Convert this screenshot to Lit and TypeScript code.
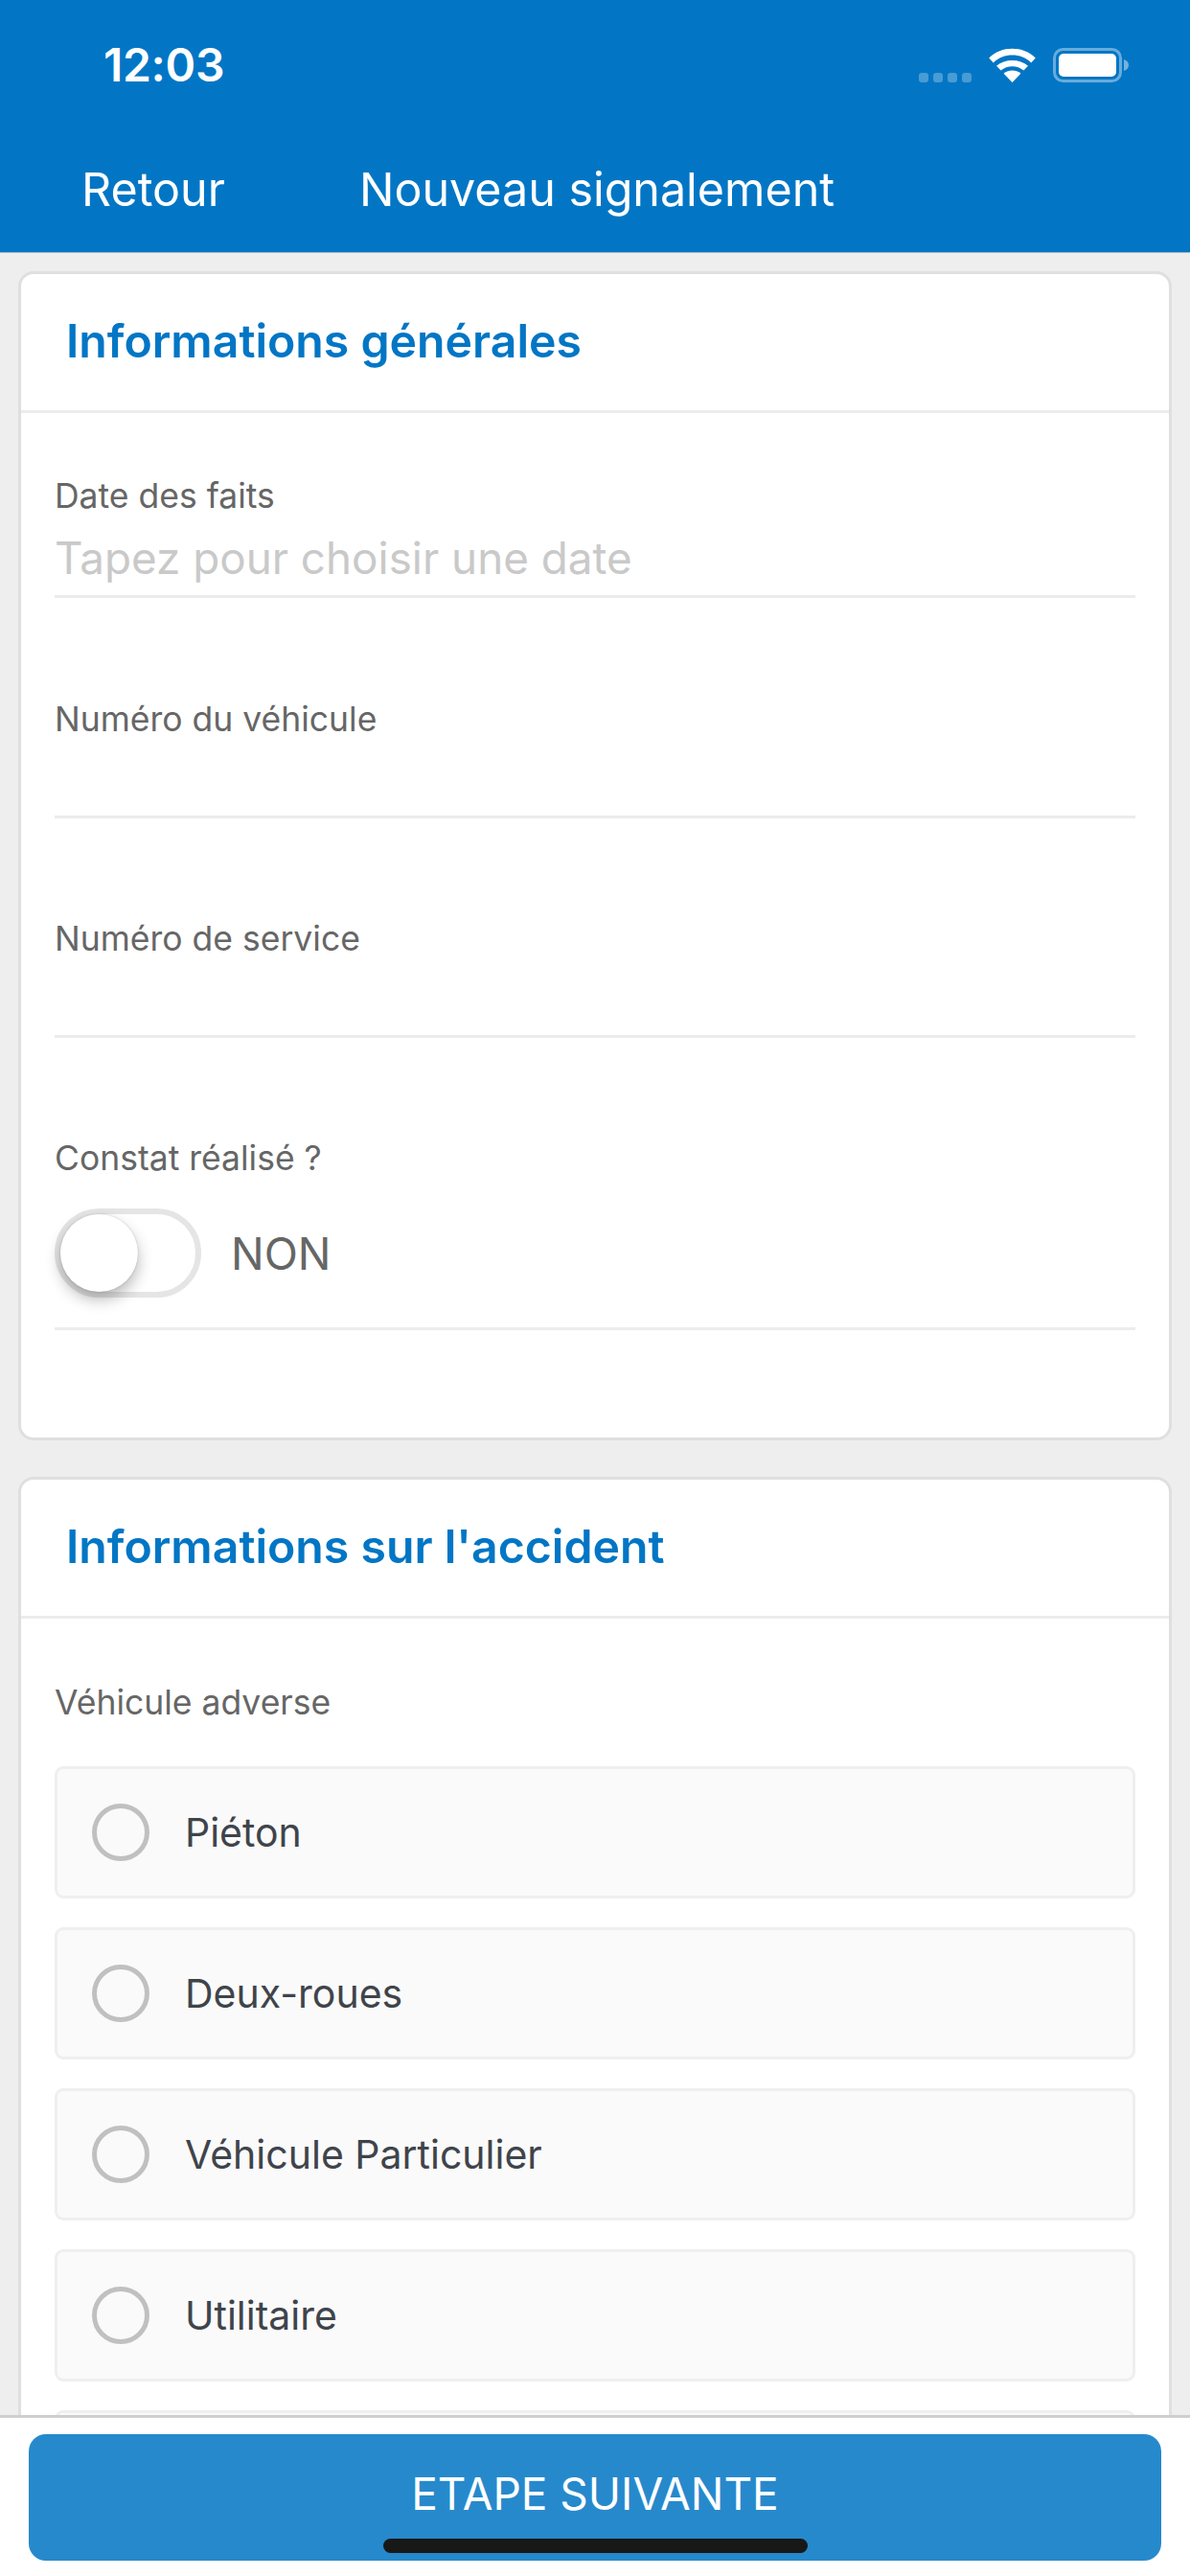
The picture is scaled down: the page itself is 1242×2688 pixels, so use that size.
import { LitElement, html, css, svg } from 'lit'
import { customElement } from 'lit/decorators.js'

const wifi = svg`<path d="M24.5 37 L15.6 27.8 C20.6 23.4 28.4 23.4 33.4 27.8 Z" fill="#fff"/>
  <path d="M12.6 24.6 L8 19.8 C16.6 12 32.4 12 41 19.8 L36.4 24.6 C29.6 18.8 19.4 18.8 12.6 24.6 Z" fill="#fff"/>
  <path d="M4.8 16.4 L0.2 11.6 C12.8 -1.4 36.2 -1.4 48.8 11.6 L44.2 16.4 C33.6 6 15.4 6 4.8 16.4 Z" fill="#fff"/>`

@customElement('app-root')
export class AppRoot extends LitElement {
  static styles = css`
    :host {
      display: block;
      width: 1242px;
      height: 2688px;
      font-family: Inter, "Liberation Sans", sans-serif;
    }

    .page {
      position: relative;
      display: flex;
      flex-direction: column;
      height: 2688px;
      overflow: hidden;
      background: #eeeeee;
    }

    header {
      flex: none;
      height: 264px;
      box-sizing: border-box;
      background: #0276c5;
      color: #fff;
      border-bottom: 1px solid #9fb6c6;
    }

    .status {
      display: flex;
      align-items: center;
      justify-content: space-between;
      height: 135px;
      padding: 0 64px 0 108px;
    }

    .time {
      font-size: 48px;
      font-weight: 600;
      letter-spacing: -0.3px;
    }

    .status-icons {
      display: flex;
      align-items: flex-end;
      gap: 18px;
    }

    .signal {
      display: flex;
      gap: 5px;
    }

    .signal i {
      width: 10px;
      height: 10px;
      border-radius: 3px;
      background: rgba(255, 255, 255, 0.28);
    }

    .nav {
      display: flex;
      align-items: center;
      height: 125px;
      font-size: 48.4px;
      padding-left: 85px;
    }

    .nav .back {
      width: 290px;
    }

    .content {
      flex: 1;
      min-height: 0;
      overflow: hidden;
      padding: 19px 19px 0;
    }

    .card {
      background: #fff;
      border: 3px solid #dfdfdf;
      border-radius: 16px;
      margin-bottom: 38px;
    }

    .card-title {
      height: 145px;
      box-sizing: border-box;
      display: flex;
      align-items: center;
      padding: 0 0 3px 47px;
      font-size: 48.2px;
      font-weight: 600;
      color: #0276c5;
      border-bottom: 3px solid #ececec;
    }

    .fields {
      padding: 0 35px 112px;
    }

    .field {
      height: 229.5px;
      box-sizing: border-box;
      display: flex;
      flex-direction: column;
      justify-content: flex-end;
      border-bottom: 3px solid #ececec;
    }

    .field.first {
      height: 193px;
    }

    .field label,
    .group-label {
      font-size: 35.5px;
      line-height: 42px;
      color: #666666;
    }

    .field label {
      margin-bottom: 5px;
    }

    .field.first label {
      margin-bottom: 8px;
    }

    .value {
      height: 74px;
      font-size: 45.8px;
      line-height: 72px;
      color: #c9c9c9;
    }

    .field.switch {
      height: 305px;
    }

    .field.switch label {
      margin-bottom: 31px;
    }

    .switch-row {
      display: flex;
      align-items: center;
      height: 93px;
      margin-bottom: 31px;
    }

    .toggle {
      position: relative;
      width: 153px;
      height: 93px;
      box-sizing: border-box;
      border: 6px solid #e5e5e5;
      border-radius: 47px;
      background: #fff;
    }

    .knob {
      position: absolute;
      left: 0;
      top: 0;
      width: 81px;
      height: 81px;
      border-radius: 50%;
      background: #fff;
      box-shadow: 0 8px 16px rgba(0, 0, 0, 0.28), 0 0 2px rgba(0, 0, 0, 0.2);
    }

    .switch-row span {
      margin-left: 31px;
      font-size: 46px;
      color: #666666;
    }

    .group {
      padding: 67px 35px 0;
    }

    .group-label {
      margin-bottom: 45px;
    }

    .options {
      display: flex;
      flex-direction: column;
      gap: 30px;
    }

    .option {
      display: flex;
      align-items: center;
      height: 138px;
      box-sizing: border-box;
      padding-left: 36px;
      background: #fafafa;
      border: 3px solid #efefef;
      border-radius: 9px;
      font-size: 41px;
      color: #3f444b;
    }

    .radio {
      flex: none;
      width: 60px;
      height: 60px;
      box-sizing: border-box;
      border: 5px solid #c0c0c0;
      border-radius: 50%;
      margin-right: 37px;
    }

    footer {
      flex: none;
      height: 168px;
      box-sizing: border-box;
      border-top: 3px solid #cfcfcf;
      background: #fff;
      padding: 17px 30px 0;
    }

    .next {
      display: flex;
      align-items: center;
      justify-content: center;
      height: 132px;
      padding-bottom: 8px;
      box-sizing: border-box;
      border-radius: 18px;
      background: #2689cc;
      color: #fff;
      font-size: 46px;
    }

    .home {
      position: absolute;
      left: 400px;
      top: 2649px;
      width: 443px;
      height: 15px;
      border-radius: 8px;
      background: #181818;
    }
  `

  render() {
    const fields = ['Numéro du véhicule', 'Numéro de service']
    const options = ['Piéton', 'Deux-roues', 'Véhicule Particulier', 'Utilitaire']
    return html`
      <div class="page">
        <header>
          <div class="status">
            <span class="time">12:03</span>
            <div class="status-icons">
              <div class="signal"><i></i><i></i><i></i><i></i></div>
              <svg width="49" height="37" viewBox="0 0 49 37">${wifi}</svg>
              <svg width="79" height="36" viewBox="0 0 79 36">
                <rect x="1.5" y="1.5" width="69" height="33" rx="9" fill="none" stroke="#fff" stroke-opacity="0.4" stroke-width="3"/>
                <rect x="6" y="6" width="60" height="24" rx="5" fill="#fff"/>
                <path d="M74 12 C77 13 79 15 79 18 C79 21 77 23 74 24 Z" fill="#fff" fill-opacity="0.45"/>
              </svg>
            </div>
          </div>
          <div class="nav">
            <span class="back">Retour</span>
            <span>Nouveau signalement</span>
          </div>
        </header>

        <div class="content">
          <section class="card">
            <div class="card-title">Informations générales</div>
            <div class="fields">
              <div class="field first">
                <label>Date des faits</label>
                <div class="value">Tapez pour choisir une date</div>
              </div>
              ${fields.map(
                (f) => html`<div class="field"><label>${f}</label><div class="value"></div></div>`
              )}
              <div class="field switch">
                <label>Constat réalisé ?</label>
                <div class="switch-row">
                  <div class="toggle"><div class="knob"></div></div>
                  <span>NON</span>
                </div>
              </div>
            </div>
          </section>

          <section class="card">
            <div class="card-title">Informations sur l'accident</div>
            <div class="group">
              <div class="group-label">Véhicule adverse</div>
              <div class="options">
                ${options.map(
                  (o) => html`<div class="option"><span class="radio"></span>${o}</div>`
                )}
                <div class="option"></div>
              </div>
            </div>
          </section>
        </div>

        <footer>
          <div class="next">ETAPE SUIVANTE</div>
        </footer>
        <div class="home"></div>
      </div>
    `
  }
}

declare global {
  interface HTMLElementTagNameMap {
    'app-root': AppRoot
  }
}
